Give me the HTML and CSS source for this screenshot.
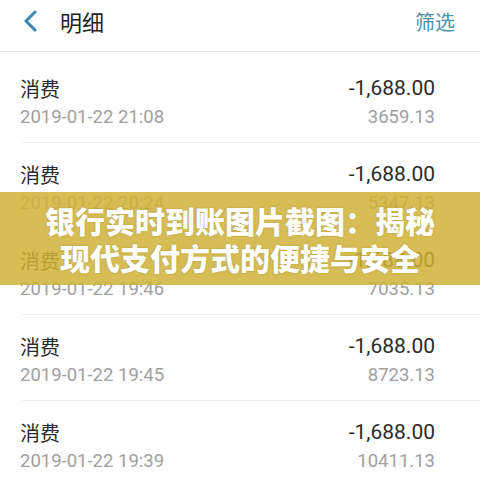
FILE: index.html
```html
<!DOCTYPE html>
<html>
<head>
    <meta charset="utf-8">
    <link rel="stylesheet" href="styles.css">
</head>
<body>

<div class="page">
    <div class="top_bar">
        <svg class="back" width="16" height="22" viewBox="0 0 16 22">
            <path d="M13 2 L4 11 L13 20" fill="none" stroke="#3b86b4" stroke-width="3" stroke-linecap="round" stroke-linejoin="round"/>
        </svg>
        <div class="title">明细</div>
        <div class="filter">筛选</div>
    </div>

    <ul class="records">
        <li>
            <div class="line"><span class="kind">消费</span><span class="amount">-1,688.00</span></div>
            <div class="line sub"><span>2019-01-22 21:08</span><span>3659.13</span></div>
        </li>
        <li>
            <div class="line"><span class="kind">消费</span><span class="amount">-1,688.00</span></div>
            <div class="line sub"><span>2019-01-22 20:24</span><span>5347.13</span></div>
        </li>
        <li>
            <div class="line"><span class="kind">消费</span><span class="amount">-1,688.00</span></div>
            <div class="line sub"><span>2019-01-22 19:46</span><span>7035.13</span></div>
        </li>
        <li>
            <div class="line"><span class="kind">消费</span><span class="amount">-1,688.00</span></div>
            <div class="line sub"><span>2019-01-22 19:45</span><span>8723.13</span></div>
        </li>
        <li>
            <div class="line"><span class="kind">消费</span><span class="amount">-1,688.00</span></div>
            <div class="line sub"><span>2019-01-22 19:39</span><span>10411.13</span></div>
        </li>
    </ul>

    <div class="banner">银行实时到账图片截图：揭秘<br>现代支付方式的便捷与安全</div>
</div>

</body>
</html>
```

FILE: styles.css
```css
html, body {
    margin: 0;
    padding: 0;
    background: #fff;
}
.page {
    position: relative;
    width: 480px;
    height: 480px;
    overflow: hidden;
    font-family: Roboto, "Noto Sans CJK SC", sans-serif;
}
.top_bar {
    height: 52px;
    display: flex;
    align-items: center;
    padding: 0 25px 9px 22px;
    box-sizing: border-box;
    border-bottom: 1px solid #e6e6e6;
}
.back {
    margin-right: 22px;
}
.title {
    font-size: 22px;
    color: #222;
    flex: 1;
}
.filter {
    font-size: 20px;
    color: #4b8fa9;
}
.records {
    list-style: none;
    margin: 0;
    padding: 5px 0 0 0;
}
.records li {
    height: 86px;
    margin-left: 22px;
    padding: 17px 45px 0 0;
    box-sizing: border-box;
    border-bottom: 1px solid #f0f0f0;
}
.line {
    display: flex;
    justify-content: space-between;
    align-items: center;
    height: 28px;
    margin-left: -2px;
}
.kind {
    font-size: 20px;
    color: #2a2a2a;
}
.amount {
    font-size: 21px;
    color: #2a2a2a;
}
.line.sub {
    height: 30px;
    font-size: 18.5px;
    color: #a0a0a0;
}
.banner {
    position: absolute;
    left: 0;
    right: 0;
    top: 192px;
    height: 93px;
    padding-top: 10px;
    box-sizing: border-box;
    background: rgba(207, 178, 55, 0.85);
    color: #fff;
    font-family: "Noto Sans CJK SC", sans-serif;
    font-weight: 900;
    font-size: 30px;
    line-height: 37px;
    text-align: center;
    text-shadow: 0 0 2px rgba(120, 100, 20, 0.4);
}
```
